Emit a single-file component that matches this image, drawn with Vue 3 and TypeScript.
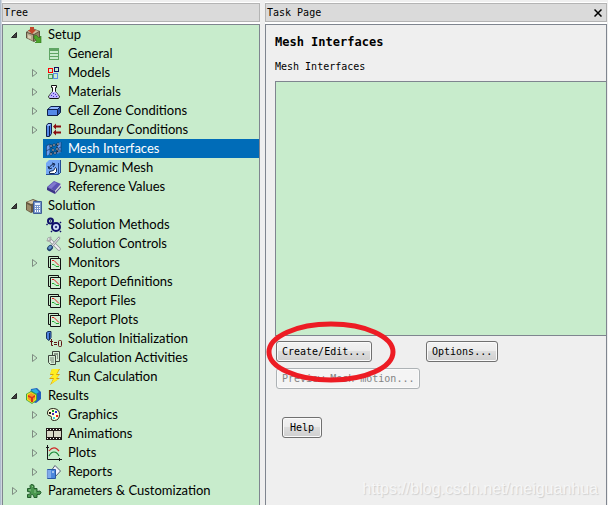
<script setup lang="ts">
import { computed, reactive, ref } from 'vue'

interface TreeNode {
  label: string
  icon: string
  level: number
  expandable?: boolean
  open?: boolean
}

const nodes = reactive<TreeNode[]>([
  { label: 'Setup', icon: 'setup', level: 0, expandable: true, open: true },
  { label: 'General', icon: 'general', level: 1 },
  { label: 'Models', icon: 'models', level: 1, expandable: true },
  { label: 'Materials', icon: 'materials', level: 1, expandable: true },
  { label: 'Cell Zone Conditions', icon: 'cell', level: 1, expandable: true },
  { label: 'Boundary Conditions', icon: 'boundary', level: 1, expandable: true },
  { label: 'Mesh Interfaces', icon: 'mesh', level: 1 },
  { label: 'Dynamic Mesh', icon: 'dynamic', level: 1 },
  { label: 'Reference Values', icon: 'book', level: 1 },
  { label: 'Solution', icon: 'solution', level: 0, expandable: true, open: true },
  { label: 'Solution Methods', icon: 'methods', level: 1 },
  { label: 'Solution Controls', icon: 'controls', level: 1 },
  { label: 'Monitors', icon: 'report', level: 1, expandable: true },
  { label: 'Report Definitions', icon: 'report', level: 1 },
  { label: 'Report Files', icon: 'report', level: 1 },
  { label: 'Report Plots', icon: 'report', level: 1 },
  { label: 'Solution Initialization', icon: 'init', level: 1 },
  { label: 'Calculation Activities', icon: 'activities', level: 1, expandable: true },
  { label: 'Run Calculation', icon: 'run', level: 1 },
  { label: 'Results', icon: 'results', level: 0, expandable: true, open: true },
  { label: 'Graphics', icon: 'graphics', level: 1, expandable: true },
  { label: 'Animations', icon: 'film', level: 1, expandable: true },
  { label: 'Plots', icon: 'plots', level: 1, expandable: true },
  { label: 'Reports', icon: 'reports', level: 1, expandable: true },
  { label: 'Parameters & Customization', icon: 'puzzle', level: 0, expandable: true },
])

const selected = ref('Mesh Interfaces')

const visibleNodes = computed(() => {
  let parentOpen = true
  return nodes.filter((node) => {
    if (node.level === 0) {
      parentOpen = !!node.open
      return true
    }
    return parentOpen
  })
})

function toggle(node: TreeNode) {
  node.open = !node.open
}
</script>

<template>
  <svg class="sprite" aria-hidden="true">
    <symbol id="setup" viewBox="0 0 16 16">
      <path d="M0 5 6 1l8 3v7l-6 4-8-4z" fill="#5f523f" />
      <path d="M1 5 6 2l7 2-5 3z" fill="#cdbf9f" />
      <path d="M1 6l6 2v6l-6-3z" fill="#b3a689" />
      <path d="M8 8l5-3v6l-5 3z" fill="#8f8062" />
      <path d="M2 8l3 1v3l-3-1z" fill="#d8ceb2" />
      <path d="M4 0h4v3h2L6 7 2 3h2z" fill="#c2472b" />
      <path d="M8 9l2-1 3 3 2-2v7H9l2-2-3-3z" fill="#4da62b" stroke="#2c7417" stroke-width=".6" />
    </symbol>
    <symbol id="general" viewBox="0 0 16 16" shape-rendering="crispEdges">
      <path d="M3 2h10v12H3z" fill="#5fa564" />
      <path d="M4 5h8v2H4zM4 8h8v2H4zM4 11h8v2H4z" fill="#c8eccc" />
    </symbol>
    <symbol id="models" viewBox="0 0 16 16" fill="none" shape-rendering="crispEdges">
      <path d="M2 3h5v5H2zM3 4v3h3V4z" fill="#f00" fill-rule="evenodd" />
      <path d="M8 2h5v5H8zM9 3v3h3V3z" fill="#101060" fill-rule="evenodd" />
      <path d="M2 9h5v5H2zM3 10v3h3v-3z" fill="#4f9a58" fill-rule="evenodd" />
      <path d="M7 8h5v6H7zM8 9v4h3V9z" fill="#5b8de8" fill-rule="evenodd" />
    </symbol>
    <symbol id="materials" viewBox="0 0 16 16">
      <path d="M5.500 1.500h5v2h-1v4l4 5-1 2h-9l-1-2 4-5v-4h-1z" fill="#fff" stroke="#111" />
      <path d="M6 8h4l3 4.500-1 1.500H4l-1-1.500z" fill="#bdb4ff" />
      <path d="M7 9h1v1H7zM9 10h1v1H9zM5 11h1v1H5zM7 12h1v1H7zM10 12h1v1h-1z" fill="#4530bd" shape-rendering="crispEdges" />
    </symbol>
    <symbol id="cell" viewBox="0 0 16 16" stroke="#10204e" stroke-linejoin="round">
      <path d="M1.500 6.500 5 3.500h9.500l-3 3z" fill="#91b7ff" />
      <path d="M1.500 6.500h10v6h-10z" fill="#5489e8" />
      <path d="M11.500 6.500l3-3v6l-3 3z" fill="#244da5" />
    </symbol>
    <symbol id="boundary" viewBox="0 0 16 16">
      <path d="M.5 3.500 2 1.500h3.500v10l-2 3h-3z" fill="#5489e8" stroke="#10204e" />
      <path d="M3.500 4v10" stroke="#10204e" />
      <path d="M1 4 2.500 2H5L3 4z" fill="#a3c2ff" />
      <path d="M7 4.500l3-3v2h5v2h-5v2zM7 10.500l3-3v2h5v2h-5v2z" fill="#8b0e0e" />
    </symbol>
    <symbol id="mesh" viewBox="0 0 16 16">
      <path d="M0 5l4-2v10l-4 2zM11 3l4-2v10l-4 2z" fill="#6a9ff0" />
      <path d="M.5 5v10M4 3v10M0 5l4-2M0 10l4-2M11 3v10M15 1v10M11 8l4-2" stroke="#163967" stroke-width=".7" />
      <path d="M4.500 5.500 12 3M4.500 13 13 10M5 5l2 4-2 4M12 3l-1 4 2 3" fill="none" stroke="#182944" stroke-dasharray="2 1" />
      <path d="M4 4h2v2H4zM7 3h2v2H7zM11 2h2v2h-2zM6 8h2v2H6zM10 7h2v2h-2zM4 12h2v2H4zM8 11h2v2H8zM12 9h2v2h-2z" fill="#b8c8d9" stroke="#1b2b43" stroke-width=".6" />
    </symbol>
    <symbol id="dynamic" viewBox="0 0 16 16">
      <path d="M0 3 3 0h12v12l-3 3H0z" fill="#76a8f5" />
      <path d="M12.500 3v11M0 14.500h12.500L15 12M14.500 0v12" fill="none" stroke="#234d96" />
      <path d="M3 8q1-3 5-4M6 3l3 1-2 3M2 6l1 3 3-1" fill="none" stroke="#132750" />
      <path d="M3.500 11.500l4-1 2-3 1 1v3l-2 2h-5z" fill="#fff" stroke="#132750" />
    </symbol>
    <symbol id="book" viewBox="0 0 16 16">
      <path d="M1 8 8 2l7 3-6 7z" fill="#5b52b4" />
      <path d="M2 8 8 3l3 1-6 6z" fill="#8179cf" />
      <path d="M1 8v3l8 4v-3z" fill="#3c3388" />
      <path d="M9 12l6-7v3l-6 7z" fill="#d5d4df" />
      <path d="M9 13.500 15 7v1.500L9 15z" fill="#504796" />
    </symbol>
    <symbol id="solution" viewBox="0 0 16 16">
      <path d="M0 4l7-3 5 2v9l-7 3-5-3z" fill="#665840" />
      <path d="M1 4l6-2 4 2-6 2z" fill="#d4c5a0" />
      <path d="M1 6l4 2v6l-4-2z" fill="#9b8b68" />
      <path d="M7.500 3.500h8v12h-8z" fill="#7795cc" stroke="#405d97" />
      <path d="M9 5h5v2H9z" fill="#e5efff" />
      <path d="M9 8h1v1H9zM11 8h1v1h-1zM13 8h1v1h-1zM9 10h1v1H9zM11 10h1v1h-1zM13 10h1v1h-1zM9 12h1v2H9zM11 12h1v2h-1zM13 12h1v2h-1z" fill="#fff" shape-rendering="crispEdges" />
    </symbol>
    <symbol id="methods" viewBox="0 0 16 16" fill="#c8eccc" stroke="#10106b">
      <circle cx="4.500" cy="4" r="2.500" stroke-width="2" />
      <circle cx="10" cy="10" r="4" fill="#d5e2fa" stroke-width="2" />
      <circle cx="4.500" cy="4" r=".4" />
      <circle cx="10" cy="10" r=".8" />
      <path d="M1.500 7l-1 1M14 6l1-1M14 14l1 1M6 14l-1 1" stroke-width="1.500" />
    </symbol>
    <symbol id="controls" viewBox="0 0 16 16" fill="none" stroke-linecap="round">
      <path d="M3 3l10 10" stroke="#8c8f96" stroke-width="3.400" />
      <path d="M3 3l10 10" stroke="#f1f1f4" stroke-width="2" />
      <path d="M1.500 4.500q3 2 3-3" stroke="#aaa" stroke-width="2" />
      <path d="M6 10l7-8" stroke="#92969c" stroke-width="2.600" />
      <path d="M6 10l7-8" stroke="#f2f3f6" />
      <path d="M3.500 12.500l1-1" stroke="#20426f" stroke-width="5" />
      <path d="M3.500 12l1-1" stroke="#6395ca" stroke-width="2.500" />
    </symbol>
    <symbol id="report" viewBox="0 0 16 16">
      <path d="M4 12.500H2.500v-11h10V3" fill="none" stroke="#111" />
      <path d="M4.500 3.500h10v11h-10z" fill="#d2efd5" stroke="#111" />
      <path d="M6 5.500h2l5 5" fill="none" stroke="#e32222" />
      <path d="M6 9.500h2l2 2h3" fill="none" stroke="#21a833" />
    </symbol>
    <symbol id="init" viewBox="0 0 16 16">
      <path d="M.5 1.500 2 .5h3v6l-2 3-2.500-2z" fill="#4f83df" stroke="#16315d" />
      <path d="M3.500 2v7" stroke="#16315d" />
      <path d="M5.500 8v6.500H7M4 10.500h3M8 11.500h3M8 13.500h3" fill="none" stroke="#601414" />
      <rect x="12.500" y="9.500" width="3" height="6" rx="1" fill="none" stroke="#601414" />
    </symbol>
    <symbol id="activities" viewBox="0 0 16 16" fill="#d6edd6" stroke="#3d453d">
      <path d="M6.500 1.500h7v10h-7z" />
      <path d="M8 4h4M11 6h1M11 8h1" />
      <path d="M2.500 5.500h7v9h-5l-2-2z" />
      <path d="M4 8h4M4 10h4M5 12h3" stroke="#778477" />
    </symbol>
    <symbol id="run" viewBox="0 0 16 16">
      <path d="M6 0h8l-3 5h3l-3 4h3L4 16l3-6H3l4-4H4z" fill="#d49a0c" />
      <path d="M6 0h7l-3 6h3l-3 4h3l-8 5 3-6H4l4-4H4z" fill="#ffed21" />
    </symbol>
    <symbol id="results" viewBox="0 0 16 16">
      <path d="M5 1l6-1 4 4v7l-5 4-7-2z" fill="#225fbd" />
      <path d="M5 2l5-1 3 3-3 2z" fill="#2bb5dd" />
      <path d="M0 6l5-3 6 3v6l-5 4-6-4z" fill="#42a73b" />
      <path d="M1 6l4-2 5 3v5l-4 3-5-3z" fill="#f1df26" />
      <path d="M2 7l3-2 4 2v4l-3 3-4-3z" fill="#f29a21" />
      <path d="M2 7l4 2 3-2v2l-2 1v4H5v-4L2 9z" fill="#d7321c" />
    </symbol>
    <symbol id="graphics" viewBox="0 0 16 16">
      <path d="M1.500 6q0-4.500 6-4.500 6 .5 6 6 0 5.500-5 6-4 0-3-3 0-2-3-2-1-1-1-2.500z" fill="#ffffda" stroke="#222218" />
      <path d="M3 5h2v2H3z" fill="#161616" />
      <path d="M6 3h2v2H6z" fill="#159b25" />
      <path d="M9 4h2v2H9z" fill="#2929df" />
      <path d="M10 8h2v2h-2z" fill="#e82020" />
      <path d="M6 6h2v2H6z" fill="#4429b5" />
      <path d="M7 10h2v2H7z" fill="#36d4e3" />
    </symbol>
    <symbol id="film" viewBox="0 0 16 16" shape-rendering="crispEdges">
      <path d="M0 2h16v12H0z" fill="#211a18" />
      <path d="M1 5h6v6H1zM8 5h7v6H8z" fill="#d8d8c7" />
      <path d="M1 3h1v1H1zM4 3h1v1H4zM7 3h1v1H7zM10 3h1v1h-1zM13 3h1v1h-1zM1 12h1v1H1zM4 12h1v1H4zM7 12h1v1H7zM10 12h1v1h-1zM13 12h1v1h-1z" fill="#fff" />
    </symbol>
    <symbol id="plots" viewBox="0 0 16 16" fill="none">
      <path d="M1.500 0v14.500H16M0 2.500h3M13.500 13v3" stroke="#151515" />
      <path d="M3 6q4-5 8-2l2 2" stroke="#d02929" stroke-width="1.200" />
      <path d="M3 11q2-4 5-4 3 0 5 4" stroke="#168632" stroke-width="1.200" />
    </symbol>
    <symbol id="reports" viewBox="0 0 16 16">
      <path d="M5 7l4-5.500L14.500 7 9 13z" fill="#f3f5ff" stroke="#555e72" />
      <path d="M1.500 5.500h8v9h-8z" fill="#4b86dc" stroke="#2857a5" />
      <path d="M4 6v8M0 7h3M0 9h3M0 11h3M0 13h3" stroke="#b4d0fa" />
      <path d="M6 8h2" stroke="#fff" />
    </symbol>
    <symbol id="puzzle" viewBox="0 0 16 16">
      <path d="M1.500 5.500h3q-1.500-4 1.500-4t2 4h3v3q4-1.500 4 1t-4 2v3h-3q0-3-2-3t-1 3h-3.500v-3q3 0 3-1.500t-3-1.500z" fill="#4a984f" stroke="#235c2c" />
      <path d="M3 7h2M6 4l1-1M9 7v3" stroke="#8bc58d" fill="none" />
    </symbol>
  </svg>

  <main class="window">
    <section class="pane" aria-labelledby="tree-title">
      <header class="title-bar"><h2 id="tree-title">Tree</h2></header>
      <div class="panel tree-panel">
        <ul class="tree">
          <li v-for="node in visibleNodes" :key="node.label" class="row" :class="{ child: node.level === 1 }">
            <button
              v-if="node.expandable"
              class="expander"
              type="button"
              :aria-label="node.label"
              :aria-expanded="!!node.open"
              @click="toggle(node)"
            >
              <svg viewBox="0 0 10 10">
                <path v-if="node.open" d="M7.500 2.500v5h-5z" fill="#404040" stroke="#262626" />
                <path v-else d="M3.500 1.500v7L8 5z" fill="none" stroke="#7f8c82" />
              </svg>
            </button>
            <span v-else class="expander"></span>
            <button
              class="item"
              type="button"
              :class="{ selected: node.label === selected }"
              @click="selected = node.label"
            >
              <svg class="icon"><use :href="'#' + node.icon" /></svg>
              <span>{{ node.label }}</span>
            </button>
          </li>
        </ul>
      </div>
    </section>

    <section class="pane" aria-labelledby="task-title">
      <header class="title-bar">
        <h2 id="task-title">Task Page</h2>
        <button class="close" type="button" aria-label="Close">
          <svg viewBox="0 0 8 8"><path d="M.5.5l7 7M7.500.5l-7 7" stroke="#000" stroke-width="1.500" /></svg>
        </button>
      </header>
      <div class="panel task-panel">
        <h1>Mesh Interfaces</h1>
        <p id="list-label" class="list-label">Mesh Interfaces</p>
        <div class="list" role="listbox" aria-labelledby="list-label" tabindex="0"></div>
        <div class="actions">
          <div class="marked">
            <button class="push" type="button">Create/Edit...</button>
            <svg class="ring" viewBox="0 0 130 62" aria-hidden="true">
              <ellipse cx="65" cy="31" rx="62" ry="28" fill="none" stroke="#ed1c24" stroke-width="5" />
            </svg>
          </div>
          <button class="push" type="button">Options...</button>
          <button class="push" type="button" disabled>Preview Mesh motion...</button>
        </div>
        <button class="push help" type="button">Help</button>
      </div>
    </section>
    <span class="watermark">https://blog.csdn.net/meiguanhua</span>
  </main>
</template>

<style>
body {
  background: #efefef;
}
</style>

<style scoped>
.sprite {
  position: absolute;
  width: 0;
  height: 0;
}

.window {
  position: relative;
  display: grid;
  grid-template-columns: minmax(0, 258fr) minmax(0, 342fr);
  gap: 5px;
  box-sizing: border-box;
  min-height: 100vh;
  padding: 2px 1px 0 2px;
  background: linear-gradient(90deg, #aebccd 0, #aebccd 1px, #efefef 2px);
  color: #000;
  font-family: "DejaVu Sans Mono", monospace;
  font-size: 10px;
}

.pane {
  display: flex;
  flex-direction: column;
  background: #fff;
  padding-top: 1px;
}

.title-bar {
  display: flex;
  align-items: center;
  justify-content: space-between;
  box-sizing: border-box;
  height: 19px;
  margin-bottom: 2px;
  padding: 0 4px 0 1px;
  border: 1px solid #b4b4b4;
  background: #dadada;
}

h1,
h2,
p {
  margin: 0;
  font-size: 10px;
  font-weight: 400;
  line-height: 16px;
}

button {
  padding: 0;
  border: 0;
  background: none;
  color: inherit;
  font: inherit;
}

.close {
  display: flex;
}

.close svg {
  width: 8px;
  height: 8px;
}

.panel {
  flex: 1;
  border: 1px solid #7f858f;
  border-bottom: 0;
}

.tree-panel {
  background: #c8eccc;
}

.tree {
  margin: 0;
  padding: 0;
  list-style: none;
  font-family: Lato, "Open Sans", sans-serif;
  font-size: 13px;
}

.row {
  display: flex;
  align-items: stretch;
  gap: 4px;
  height: 19px;
  padding-left: 6px;
}

.child {
  padding-left: 26px;
}

.expander {
  display: flex;
  align-items: center;
  width: 10px;
}

.expander svg {
  width: 10px;
  height: 10px;
}

.item {
  display: flex;
  flex: 1;
  align-items: center;
  gap: 6px;
  padding-left: 3px;
  line-height: 19px;
  text-align: left;
  white-space: nowrap;
}

.item.selected {
  background: #006cb8;
  color: #fff;
}

.icon {
  width: 16px;
  height: 16px;
}

.task-panel {
  padding: 9px 0 0 9px;
  background: #efefef;
}

h1 {
  font-size: 12px;
  font-weight: 700;
}

.list-label {
  margin-top: 9px;
}

.list {
  height: 253px;
  margin-top: 6px;
  margin-right: -1px;
  border: 1px solid #7f858f;
  background: #c8eccc;
}

.actions {
  display: grid;
  grid-template-columns: 150px 1fr;
  gap: 6px 0;
  justify-items: start;
  padding: 5px 0 0 1px;
}

.push {
  height: 21px;
  padding: 0 5px;
  border: 1px solid #707070;
  border-radius: 3px;
  background: linear-gradient(#f2f2f2 0, #ebebeb 50%, #dddddd 50%, #cfcfcf 100%);
  box-shadow: inset 0 0 0 1px #fafafa;
  line-height: 19px;
  white-space: nowrap;
}

.push:disabled {
  border-color: #adb2b5;
  background: #f4f4f4;
  color: #838383;
}

.marked {
  position: relative;
  display: flex;
}

.ring {
  position: absolute;
  z-index: 1;
  top: -20px;
  left: -10px;
  width: 130px;
  height: 62px;
  pointer-events: none;
}

.help {
  margin: 28px 0 0 7px;
  padding: 0 7px;
}

.watermark {
  position: absolute;
  right: 10px;
  bottom: 6px;
  color: #f6f6f6;
  font-family: "Liberation Sans", Arial, sans-serif;
  font-size: 16px;
  line-height: 20px;
  text-shadow: 1px 1px 1px #cfcfcf;
  pointer-events: none;
}
</style>
